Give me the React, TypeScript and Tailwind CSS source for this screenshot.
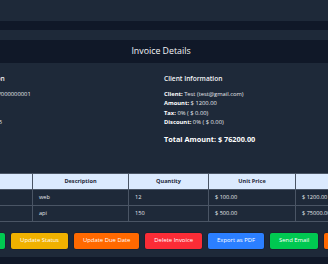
import React from 'react';

interface LineItem {
  name: string;
  description: string;
  quantity: number;
  unitPrice: number;
  total: number;
}

const ITEMS: LineItem[] = [
  { name: 'Website', description: 'web', quantity: 12, unitPrice: 100, total: 1200 },
  { name: 'API', description: 'api', quantity: 150, unitPrice: 500, total: 75000 },
];

const ACTIONS = [
  { label: 'Record Payment', className: 'bg-green-500' },
  { label: 'Update Status', className: 'bg-yellow-500' },
  { label: 'Update Due Date', className: 'bg-orange-500' },
  { label: 'Delete Invoice', className: 'bg-red-500' },
  { label: 'Export as PDF', className: 'bg-blue-500' },
  { label: 'Send Email', className: 'bg-green-500' },
  { label: 'Duplicate', className: 'bg-orange-500' },
];

function money(value: number): string {
  return `$ ${value.toFixed(2)}`;
}

function InfoLine({ label, value }: { label: string; value: string }) {
  return (
    <div>
      <span className="font-bold text-white">{label}:</span> {value}
    </div>
  );
}

export default function App() {
  return (
    <div
      className="min-h-screen w-[328px] overflow-hidden bg-gray-900 text-gray-200"
      style={{ fontFamily: '"Open Sans", "Noto Sans", sans-serif' }}
    >
      <div className="w-[494px] -ml-[86px]">
        {/* navbar */}
        <div className="h-[21px] bg-gray-800 flex items-center justify-end pr-[58px]">
          <button type="button" className="h-[11px] px-[4px] rounded-[2px] bg-gray-700 text-[5.5px] leading-none text-gray-200">
            Stats
          </button>
        </div>

        <div className="mt-[9px] bg-gray-800 pt-[10px]">
          <div className="h-[23px] bg-gray-900 flex items-center justify-center">
            <h1 className="text-[8.8px] text-gray-100">Invoice Details</h1>
          </div>

          <div className="px-[28px] pt-[10px] pb-[8px]">
            <div className="grid grid-cols-2 gap-[6px]">
              <div>
                <h2 className="text-[6.6px] font-semibold text-gray-100 leading-[11px] mb-[6px]">Invoice Information</h2>
                <div className="text-[5.8px] leading-[9.4px]">
                  <InfoLine label="Invoice Number" value="INV000000001" />
                  <InfoLine label="Status" value="Pending" />
                  <InfoLine label="Issued" value="2025-01-10" />
                  <InfoLine label="Due Date" value="2025-01-25" />
                </div>
              </div>
              <div>
                <h2 className="text-[6.6px] font-semibold text-gray-100 leading-[11px] mb-[6px]">Client Information</h2>
                <div className="text-[5.8px] leading-[9.4px]">
                  <InfoLine label="Client" value="Test (test@gmail.com)" />
                  <InfoLine label="Amount" value="$ 1200.00" />
                  <InfoLine label="Tax" value="0% ( $ 0.00)" />
                  <InfoLine label="Discount" value="0% ( $ 0.00)" />
                </div>
                <div className="mt-[5px] text-[7.3px] font-bold text-white leading-[12px]">Total Amount: $ 76200.00</div>
              </div>
            </div>

            <table className="mt-[28px] w-full table-fixed border-collapse text-[5.6px]">
              <thead>
                <tr className="h-[16px] bg-blue-100 text-gray-800">
                  <th className="w-[90px] border border-gray-600 font-bold">Name</th>
                  <th className="w-[96px] border border-gray-600 font-bold">Description</th>
                  <th className="w-[80px] border border-gray-600 font-bold">Quantity</th>
                  <th className="w-[87px] border border-gray-600 font-bold">Unit Price</th>
                  <th className="border border-gray-600 font-bold">Total</th>
                </tr>
              </thead>
              <tbody>
                {ITEMS.map((item) => (
                  <tr key={item.description} className="h-[16px]">
                    <td className="border border-gray-600 px-[6px]">{item.name}</td>
                    <td className="border border-gray-600 px-[6px]">{item.description}</td>
                    <td className="border border-gray-600 px-[6px]">{item.quantity}</td>
                    <td className="border border-gray-600 px-[6px]">{money(item.unitPrice)}</td>
                    <td className="border border-gray-600 px-[6px]">{money(item.total)}</td>
                  </tr>
                ))}
              </tbody>
            </table>

            <div className="mt-[11px] flex gap-[6px]">
              {ACTIONS.map((action) => (
                <button
                  key={action.label}
                  type="button"
                  className={`${action.className} h-[16px] px-[9px] rounded-[2px] text-[5.9px] text-white whitespace-nowrap shadow-[0_0_0_0.5px_rgba(0,0,0,0.25)]`}
                >
                  {action.label}
                </button>
              ))}
            </div>
          </div>
        </div>
      </div>
    </div>
  );
}
